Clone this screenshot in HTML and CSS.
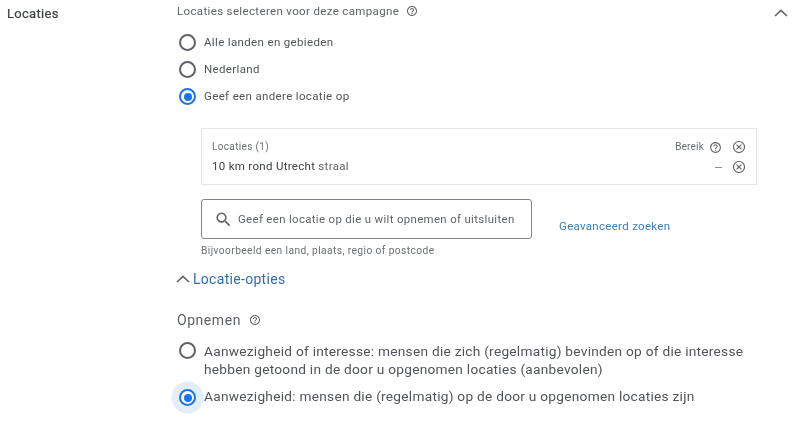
FILE: index.html
```html
<!DOCTYPE html>
<html lang="nl">
<head>
<meta charset="utf-8">
<title>Locaties</title>
<link rel="stylesheet" href="styles.css">
</head>
<body>
<main class="section">
  <h2 class="section-title">Locaties</h2>
  <div class="content">
    <div class="heading">
      <span>Locaties selecteren voor deze campagne</span>
      <svg class="help" viewBox="0 0 24 24"><use href="#i-help"/></svg>
    </div>
    <div class="radio-list">
      <div class="radio-row"><span class="radio"></span><span class="radio-label">Alle landen en gebieden</span></div>
      <div class="radio-row"><span class="radio"></span><span class="radio-label">Nederland</span></div>
      <div class="radio-row"><span class="radio on"></span><span class="radio-label">Geef een andere locatie op</span></div>
    </div>
    <div class="loc-table">
      <div class="loc-names">
        <div class="loc-head">Locaties (1)</div>
        <div class="loc-item">10 km rond Utrecht <span class="muted">straal</span></div>
      </div>
      <div class="loc-side">
        <div class="loc-side-row">
          <span class="loc-head tight">Bereik</span>
          <svg class="help" viewBox="0 0 24 24"><use href="#i-help"/></svg>
          <svg class="remove" viewBox="0 0 24 24"><use href="#i-x"/></svg>
        </div>
        <div class="loc-side-row">
          <span class="dash"></span>
          <svg class="remove" viewBox="0 0 24 24"><use href="#i-x"/></svg>
        </div>
      </div>
    </div>
    <div class="search-row">
      <div class="search">
        <svg class="search-icon" viewBox="0 0 24 24"><path d="M15.5 14h-.79l-.28-.27A6.47 6.47 0 0 0 16 9.5 6.5 6.5 0 1 0 9.5 16c1.61 0 3.09-.59 4.23-1.57l.27.28v.79l5 4.99L20.49 19l-4.99-5zm-6 0C7.01 14 5 11.99 5 9.5S7.01 5 9.5 5 14 7.01 14 9.5 11.99 14 9.5 14z"/></svg>
        <span>Geef een locatie op die u wilt opnemen of uitsluiten</span>
      </div>
      <a class="advanced">Geavanceerd zoeken</a>
    </div>
    <div class="hint">Bijvoorbeeld een land, plaats, regio of postcode</div>
    <div class="options-toggle">
      <svg class="chev-small" viewBox="0 0 14 8"><path d="M1 7l6-5.6L13 7"/></svg>
      <a>Locatie-opties</a>
    </div>
    <div class="include-head">
      <span>Opnemen</span>
      <svg class="help" viewBox="0 0 24 24"><use href="#i-help"/></svg>
    </div>
    <div class="include-row first">
      <span class="radio"></span>
      <span>Aanwezigheid of interesse: mensen die zich (regelmatig) bevinden op of die interesse<br>hebben getoond in de door u opgenomen locaties (aanbevolen)</span>
    </div>
    <div class="include-row last">
      <span class="radio on halo"></span>
      <span>Aanwezigheid: mensen die (regelmatig) op de door u opgenomen locaties zijn</span>
    </div>
  </div>
  <svg class="collapse" viewBox="0 0 14 8"><path d="M1 7l6-5.6L13 7"/></svg>
</main>
<svg class="defs" aria-hidden="true">
  <defs>
    <g id="i-help" fill="#5f6368"><path d="M11 18h2v-2h-2v2zm1-16C6.48 2 2 6.48 2 12s4.48 10 10 10 10-4.48 10-10S17.52 2 12 2zm0 18c-4.41 0-8-3.59-8-8s3.59-8 8-8 8 3.59 8 8-3.59 8-8 8zm0-14c-2.21 0-4 1.79-4 4h2c0-1.1.9-2 2-2s2 .9 2 2c0 2-3 1.75-3 5h2c0-2.25 3-2.5 3-5 0-2.21-1.79-4-4-4z"/></g>
    <g id="i-x" fill="none" stroke="#5f6368" stroke-width="2"><circle cx="12" cy="12" r="9.5"/><path d="M7.8 7.8l8.4 8.4M16.2 7.8l-8.4 8.4"/></g>
  </defs>
</svg>
</body>
</html>
```
FILE: styles.css
```css
* { box-sizing: border-box; }
html, body { margin: 0; height: 424px; overflow: hidden; background: #fff; }
body { font-family: Roboto, "Liberation Sans", sans-serif; color: #5f6368; font-size: 11.5px; letter-spacing: .35px; }
.defs { width: 0; height: 0; display: block; }

.section { display: flex; align-items: flex-start; width: 800px; height: 424px; position: relative; filter: blur(.35px); }
.section-title { width: 177px; margin: 0; padding: 6px 0 0 7px; font-size: 13px; line-height: 15px; font-weight: 400; color: #3c4043; letter-spacing: .3px; -webkit-text-stroke: .2px #3c4043; }
.content { width: 580px; padding-top: 4px; }
.collapse { position: absolute; left: 774px; top: 9px; width: 14px; height: 8px; fill: none; stroke: #5f6368; stroke-width: 1.6; }

.heading { display: flex; align-items: center; gap: 7px; height: 14px; line-height: 14px; }
.help { width: 12px; height: 12px; flex: none; }

.radio-list { display: flex; flex-direction: column; gap: 10px; margin-top: 16px; }
.radio-row { display: flex; align-items: center; height: 17px; gap: 8px; margin-left: 2px; color: #505458; }
.radio-label { margin-bottom: 2px; }
.radio { width: 17px; height: 17px; border: 2px solid #5f6368; border-radius: 50%; flex: none; position: relative; background: #fff; }
.radio.on { border-color: #1a73e8; }
.radio.on::after { content: ""; position: absolute; inset: 2.5px; border-radius: 50%; background: #1a73e8; }
.radio.halo { box-shadow: 0 0 0 7.5px #e3eefc; margin-top: 2px; }

.loc-table { display: flex; justify-content: space-between; margin: 23px 0 0 24px; width: 556px; height: 57px; border: 1px solid #e4e6e8; padding: 12px 10px 0 10px; }
.loc-head { font-size: 10px; line-height: 12px; color: #6a6e73; }
.loc-head.tight { letter-spacing: .2px; }
.loc-item { margin-top: 6px; font-size: 11.5px; line-height: 14px; color: #3c4043; letter-spacing: .3px; }
.muted { color: #5f6368; }
.loc-side { display: flex; flex-direction: column; align-items: flex-end; gap: 6px; margin-top: -1px; }
.loc-side-row { display: flex; align-items: center; height: 14px; }
.loc-side-row .help { margin-left: 5px; width: 13px; height: 13px; }
.remove { width: 14px; height: 14px; margin-left: 10px; }
.dash { width: 7px; height: 1px; background: #8a8d91; }

.search-row { display: flex; align-items: center; margin: 14px 0 0 24px; }
.search { display: flex; align-items: center; gap: 5px; width: 331px; height: 40px; border: 1px solid #80868b; border-radius: 3px; padding-left: 12px; font-size: 11.4px; color: #5f6368; white-space: nowrap; }
.search-icon { width: 19px; height: 19px; fill: #5f6368; flex: none; }
.advanced { margin: 13px 0 0 27px; font-size: 11.5px; line-height: 14px; color: #3b7db5; letter-spacing: .3px; }
.hint { margin: 6px 0 0 24px; font-size: 10.2px; line-height: 12px; color: #6a6e73; letter-spacing: .42px; }

.options-toggle { display: flex; align-items: center; gap: 3px; margin: 13px 0 0 -1px; height: 18px; font-size: 14px; letter-spacing: .3px; }
.options-toggle a { color: #2f6ea8; }
.chev-small { width: 14px; height: 8px; fill: none; stroke: #5f6368; stroke-width: 1.6; flex: none; }

.include-head { display: flex; align-items: center; gap: 8px; margin-top: 24px; height: 16px; font-size: 14px; letter-spacing: .55px; }
.include-row { display: flex; align-items: flex-start; gap: 8px; margin-left: 2px; font-size: 13.7px; line-height: 18px; color: #505458; letter-spacing: .26px; white-space: nowrap; }
.include-row.first { margin-top: 14px; }
.include-row.last { margin-top: 9px; }
```
